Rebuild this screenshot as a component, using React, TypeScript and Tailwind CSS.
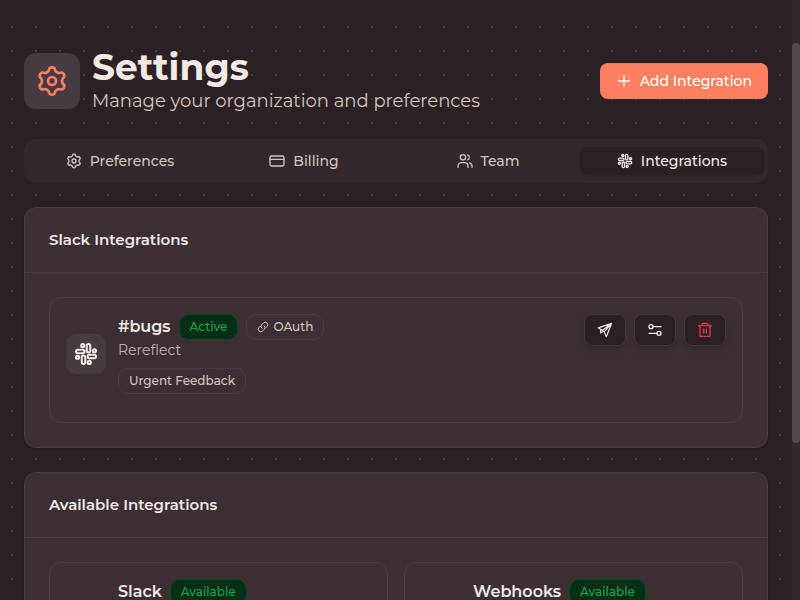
import type { ReactNode } from 'react';

type IconProps = { className?: string };

function Icon({
  className = 'size-4',
  stroke = 2,
  children,
}: IconProps & { stroke?: number; children: ReactNode }) {
  return (
    <svg
      viewBox="0 0 24 24"
      fill="none"
      stroke="currentColor"
      strokeWidth={stroke}
      strokeLinecap="round"
      strokeLinejoin="round"
      aria-hidden="true"
      className={`shrink-0 ${className}`}
    >
      {children}
    </svg>
  );
}

function polar(angle: number, radius: number) {
  const rad = (angle * Math.PI) / 180;
  return `${(12 + radius * Math.sin(rad)).toFixed(2)} ${(12 - radius * Math.cos(rad)).toFixed(2)}`;
}

// Six rounded lobes joined by shallow valleys
const gearPath =
  `M${polar(-13, 9.2)}` +
  [0, 60, 120, 180, 240, 300]
    .map(
      (a) =>
        `C${polar(a - 9, 10.8)} ${polar(a + 9, 10.8)} ${polar(a + 13, 9.2)}` +
        `C${polar(a + 19, 7.2)} ${polar(a + 41, 7.2)} ${polar(a + 47, 9.2)}`,
    )
    .join('') +
  'Z';

const GearIcon = ({ className }: IconProps) => (
  <Icon className={className}>
    <path d={gearPath} />
    <circle cx="12" cy="12" r="3" />
  </Icon>
);

const CardIcon = () => (
  <Icon>
    <rect x="1.5" y="4.5" width="21" height="15" rx="2.5" />
    <path d="M1.5 9.5h21" />
  </Icon>
);

const TeamIcon = () => (
  <Icon>
    <circle cx="9" cy="6.5" r="4" />
    <path d="M1.5 21.5v-2a5 5 0 0 1 5-5h5a5 5 0 0 1 5 5v2M16 2.8a4 4 0 0 1 0 7.4M18.5 14.8a5 5 0 0 1 4 4.7v2" />
  </Icon>
);

const SlackIcon = ({ className }: IconProps) => (
  <Icon className={className}>
    {[0, 90, 180, 270].map((a) => (
      <g key={a} transform={`rotate(${a} 12 12)`}>
        <rect x="12.75" y="2" width="3.5" height="8.5" rx="1.75" />
        <circle cx="8.75" cy="3.6" r="1.6" />
      </g>
    ))}
  </Icon>
);

const PlusIcon = () => (
  <Icon>
    <path d="M12 4v16M4 12h16" />
  </Icon>
);

const LinkIcon = () => (
  <Icon className="size-3">
    <path d="M9.5 14.5a5 5 0 0 1 0-7l4-4a5 5 0 0 1 7 7l-3 3" />
    <path d="M14.5 9.5a5 5 0 0 1 0 7l-4 4a5 5 0 0 1-7-7l3-3" />
  </Icon>
);

const SendIcon = () => (
  <Icon stroke={1.75}>
    <path d="M22 2 1.8 8.8l6.4 4L22 2Zm0 0-8 20-3.2-7.2L22 2ZM5.5 11.500v5l4-2.500" />
  </Icon>
);

const SlidersIcon = () => (
  <Icon>
    <circle cx="6" cy="7" r="3" />
    <path d="M9 7h12M15 17H3" />
    <circle cx="18" cy="17" r="3" />
  </Icon>
);

const TrashIcon = () => (
  <Icon>
    <path d="M2 5.5h20M4.5 5.5v16h15v-16M7.5 5.5V4a2 2 0 0 1 2-2h5a2 2 0 0 1 2 2v1.5M10 10.5V17M14 10.5V17" />
  </Icon>
);

const tabs = [
  { label: 'Preferences', icon: <GearIcon /> },
  { label: 'Billing', icon: <CardIcon /> },
  { label: 'Team', icon: <TeamIcon /> },
  { label: 'Integrations', icon: <SlackIcon />, active: true },
];

function Badge({ green, children }: { green?: boolean; children: ReactNode }) {
  return (
    <span
      className={`inline-flex h-[26px] items-center gap-1 rounded-[10px] border px-2.5 text-xs font-medium ${
        green ? 'border-[#0b4a20] bg-[#052e16] text-[#16a34a]' : 'border-[#483c42] text-[#d4c5bb]'
      }`}
    >
      {children}
    </span>
  );
}

function ActionButton({ label, danger, children }: { label: string; danger?: boolean; children: ReactNode }) {
  return (
    <button
      type="button"
      aria-label={label}
      className={`flex h-8 w-[42px] items-center justify-center rounded-lg border border-[#43373d] bg-[#2b2024] shadow-md ${
        danger ? 'text-[#e63946]' : 'text-[#f5ebe6]'
      }`}
    >
      {children}
    </button>
  );
}

function Panel({ title, children }: { title: string; children: ReactNode }) {
  return (
    <section className="rounded-xl border border-[#483c42] bg-[#3b2f35] shadow-sm">
      <h2 className="border-b border-[#483c42] p-6 text-[15px] leading-4 font-semibold">{title}</h2>
      <div className="p-6">{children}</div>
    </section>
  );
}

function IconTile() {
  return (
    <div className="flex size-10 shrink-0 items-center justify-center rounded-[10px] bg-[#463b41]">
      <SlackIcon className="size-6" />
    </div>
  );
}

function AvailableCard({ name }: { name: string }) {
  return (
    <article className="rounded-xl border border-[#483c42] p-4">
      <div className="flex items-center gap-3">
        <IconTile />
        <div className="min-h-24">
          <div className="flex items-center gap-2">
            <h3 className="text-base font-semibold">{name}</h3>
            <Badge green>Available</Badge>
          </div>
        </div>
      </div>
    </article>
  );
}

export default function App() {
  return (
    <div className="flex h-screen overflow-hidden bg-[#2b2024] font-['Montserrat',sans-serif] text-[#f5ebe6]">
      <main className="min-w-0 flex-1 pt-[15px]">
        <div className="bg-[radial-gradient(circle,#483c42_1px,transparent_1px)] bg-size-[24px_24px] px-6 pt-8">
          <header className="flex items-center justify-between">
            <div className="flex items-center gap-3">
              <div className="flex size-14 items-center justify-center rounded-xl bg-[#463b41] text-[#ff7f61]">
                <GearIcon className="size-8" />
              </div>
              <div>
                <h1 className="text-4xl font-bold">Settings</h1>
                <p className="text-lg text-[#d4c5bb]">Manage your organization and preferences</p>
              </div>
            </div>
            <button
              type="button"
              className="flex h-9 items-center gap-2 rounded-lg bg-[#ff7f61] px-4 text-sm font-medium text-white"
            >
              <PlusIcon />
              Add Integration
            </button>
          </header>

          <nav className="mt-6 grid grid-cols-4 rounded-xl bg-[#32282d] px-1 py-2">
            {tabs.map((tab) => (
              <button
                key={tab.label}
                type="button"
                className={`flex h-7 items-center justify-center gap-2 rounded-lg text-sm font-medium ${
                  tab.active ? 'bg-[#2b2024] text-[#f5ebe6] shadow-sm' : 'text-[#d4c5bb]'
                }`}
              >
                {tab.icon}
                {tab.label}
              </button>
            ))}
          </nav>

          <div className="mt-6 grid gap-6">
            <Panel title="Slack Integrations">
              <article className="flex items-start justify-between rounded-xl border border-[#483c42] px-4 pt-4 pb-7">
                <div className="flex items-center gap-3">
                  <IconTile />
                  <div>
                    <div className="flex items-center gap-2">
                      <h3 className="text-base font-semibold">#bugs</h3>
                      <Badge green>Active</Badge>
                      <Badge>
                        <LinkIcon />
                        OAuth
                      </Badge>
                    </div>
                    <p className="mb-2 text-sm text-[#c2b3aa]">Rereflect</p>
                    <div className="flex">
                      <Badge>Urgent Feedback</Badge>
                    </div>
                  </div>
                </div>
                <div className="flex gap-2">
                  <ActionButton label="Send test message">
                    <SendIcon />
                  </ActionButton>
                  <ActionButton label="Configure">
                    <SlidersIcon />
                  </ActionButton>
                  <ActionButton label="Delete" danger>
                    <TrashIcon />
                  </ActionButton>
                </div>
              </article>
            </Panel>

            <Panel title="Available Integrations">
              <div className="grid grid-cols-2 gap-4">
                <AvailableCard name="Slack" />
                <AvailableCard name="Webhooks" />
              </div>
            </Panel>
          </div>
        </div>
      </main>
      <div className="w-2 shrink-0 bg-[#32282d] pt-[43px]">
        <div className="h-[400px] rounded-full bg-[#55494f]" />
      </div>
    </div>
  );
}
